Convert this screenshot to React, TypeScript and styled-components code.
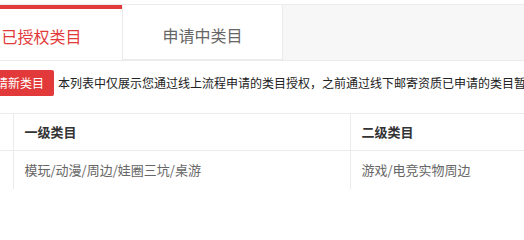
import React from "react";
import styled, { createGlobalStyle } from "styled-components";

const colors = {
  red: "#e23a3a",
  line: "#ebebeb",
  text: "#333",
  sub: "#666",
  bar: "#f7f7f7",
};

interface IRow {
  first: string;
  second: string;
}

const rows: IRow[] = [
  { first: "模玩/动漫/周边/娃圈三坑/桌游", second: "游戏/电竞实物周边" },
];

export default function App() {
  return (
    <>
      <GlobalStyle />
      <Page>
        <TabBar>
          <Tab active>已授权类目</Tab>
          <Tab active={false}>申请中类目</Tab>
        </TabBar>
        <Toolbar>
          <ApplyButton>申请新类目</ApplyButton>
          <Notice>
            本列表中仅展示您通过线上流程申请的类目授权，之前通过线下邮寄资质已申请的类目暂不在此展示
          </Notice>
        </Toolbar>
        <Table>
          <thead>
            <tr>
              <Cell as="th" className="lead" />
              <Cell as="th" className="first">一级类目</Cell>
              <Cell as="th">二级类目</Cell>
            </tr>
          </thead>
          <tbody>
            {rows.map((row, index) => (
              <tr key={index}>
                <Cell className="lead" />
                <Cell className="first">{row.first}</Cell>
                <Cell>{row.second}</Cell>
              </tr>
            ))}
          </tbody>
        </Table>
      </Page>
    </>
  );
}

const GlobalStyle = createGlobalStyle`
  html, body {
    margin: 0;
    padding: 0;
    background: #fff;
    overflow: hidden;
  }
  body {
    font-family: "Noto Sans CJK SC", "Noto Sans", sans-serif;
    color: ${colors.text};
  }
`;

const Page = styled.div`
  margin-left: -39px;
  padding-top: 4px;
  width: 900px;
`;

const TabBar = styled.div`
  display: flex;
  height: 55px;
  background: ${colors.bar};
  border-top: 1px solid ${colors.line};
  border-bottom: 1px solid ${colors.line};
`;

const Tab = styled.div<{ active: boolean }>`
  position: relative;
  width: 161px;
  box-sizing: border-box;
  display: flex;
  align-items: center;
  justify-content: center;
  padding-top: 6px;
  background: #fff;
  font-size: 16px;
  line-height: 20px;
  color: ${(props) => (props.active ? colors.red : colors.sub)};
  border-right: ${(props) => (props.active ? "none" : `1px solid ${colors.line}`)};
  border-left: ${(props) => (props.active ? "none" : `1px solid ${colors.line}`)};
  border-bottom: ${(props) => (props.active ? "none" : `1px solid ${colors.line}`)};

  &::before {
    content: "";
    display: ${(props) => (props.active ? "block" : "none")};
    position: absolute;
    top: 0;
    left: 0;
    right: 0;
    height: 4px;
    background: ${colors.red};
  }
`;

const Toolbar = styled.div`
  display: flex;
  align-items: center;
  gap: 4px;
  margin: 9px 0 0 13px;
  white-space: nowrap;
`;

const ApplyButton = styled.button`
  height: 26px;
  padding: 0 10px;
  border: none;
  border-radius: 2px;
  background: ${colors.red};
  color: #fff;
  font-family: inherit;
  font-size: 12px;
  line-height: 26px;
`;

const Notice = styled.span`
  font-size: 12px;
  line-height: 16px;
  color: #222;
`;

const Table = styled.table`
  margin-top: 17px;
  border-collapse: collapse;
  width: 1000px;
  border-top: 1px solid ${colors.line};

  tbody td {
    color: ${colors.sub};
    height: 38px;
    padding-top: 1px;
  }
`;

const Cell = styled.td`
  box-sizing: border-box;
  height: 37px;
  padding: 0 11px;
  font-size: 13px;
  line-height: 18px;
  text-align: left;
  font-weight: normal;
  color: ${colors.text};
  border-left: 1px solid ${colors.line};
  th& {
    font-weight: bold;
    border-bottom: 1px solid ${colors.line};
  }
  &.lead {
    width: 52px;
    border-left: none;
  }
  &.first {
    width: 337px;
  }
`;
